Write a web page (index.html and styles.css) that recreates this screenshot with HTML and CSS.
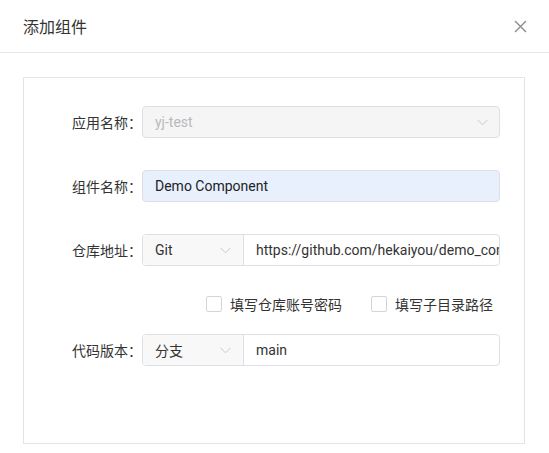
FILE: index.html
```html
<!DOCTYPE html>
<html lang="zh-CN">
<head>
<meta charset="utf-8">
<title>添加组件</title>
<link rel="stylesheet" href="styles.css">
</head>
<body>
<div class="dialog">
  <div class="header">
    <span class="title">添加组件</span>
    <svg class="close" width="13" height="13" viewBox="0 0 13 13"><path d="M1 1L12 12M12 1L1 12" stroke="#8c8c8c" stroke-width="1.4" fill="none"/></svg>
  </div>
  <div class="body">
    <div class="card">
      <div class="row">
        <label class="label">应用名称：</label>
        <div class="input disabled">
          <span class="val">yj-test</span>
          <svg class="arrow" width="11" height="7" viewBox="0 0 11 7"><path d="M0.5 0.8L5.5 5.8L10.5 0.8" stroke="#c8c9cc" stroke-width="1" fill="none"/></svg>
        </div>
      </div>
      <div class="row">
        <label class="label">组件名称：</label>
        <div class="input autofill"><span class="val">Demo Component</span></div>
      </div>
      <div class="row">
        <label class="label">仓库地址：</label>
        <div class="group">
          <div class="prepend">
            <span class="val">Git</span>
            <svg class="arrow" width="11" height="7" viewBox="0 0 11 7"><path d="M0.5 0.8L5.5 5.8L10.5 0.8" stroke="#c8c9cc" stroke-width="1" fill="none"/></svg>
          </div>
          <div class="field"><span class="val">https://github.com/hekaiyou/demo_component</span></div>
        </div>
      </div>
      <div class="checks">
        <label class="check"><span class="box"></span><span>填写仓库账号密码</span></label>
        <label class="check"><span class="box"></span><span>填写子目录路径</span></label>
      </div>
      <div class="row last">
        <label class="label">代码版本：</label>
        <div class="group">
          <div class="prepend">
            <span class="val">分支</span>
            <svg class="arrow" width="11" height="7" viewBox="0 0 11 7"><path d="M0.5 0.8L5.5 5.8L10.5 0.8" stroke="#c8c9cc" stroke-width="1" fill="none"/></svg>
          </div>
          <div class="field"><span class="val">main</span></div>
        </div>
      </div>
    </div>
  </div>
</div>
</body>
</html>
```
FILE: styles.css
```css
html, body {
  margin: 0;
  padding: 0;
  background: #fff;
}
body {
  font-family: Roboto, "Noto Sans CJK SC", sans-serif;
  font-size: 14px;
  color: #333;
}
.dialog {
  width: 549px;
  height: 453px;
  overflow: hidden;
}
.header {
  height: 52px;
  border-bottom: 1px solid #e8e8e8;
  display: flex;
  align-items: center;
  justify-content: space-between;
  padding: 0 22px 0 23px;
}
.title {
  font-size: 16px;
  color: #333;
  font-family: "Noto Sans CJK SC", sans-serif;
}
.body {
  padding: 24px 24px 0 23px;
}
.card {
  box-sizing: border-box;
  border: 1px solid #e4e4e4;
  height: 367px;
  padding: 28px 24px 0 0;
}
.row {
  display: flex;
  align-items: center;
  height: 32px;
  margin-bottom: 32px;
}
.row.last { margin-bottom: 0; }
.label {
  width: 118px;
  flex: none;
  text-align: right;
  font-family: "Noto Sans CJK SC", sans-serif;
  color: #333;
  white-space: nowrap;
}
.input {
  flex: 1;
  height: 32px;
  box-sizing: border-box;
  border: 1px solid #dcdfe6;
  border-radius: 4px;
  display: flex;
  align-items: center;
  padding: 0 11px 0 12px;
  justify-content: space-between;
  overflow: hidden;
}
.input.disabled {
  background: #f5f5f5;
  color: #b8b9bc;
}
.input.autofill {
  background: #e8f0fe;
  color: #222;
}
.val {
  white-space: nowrap;
}
.group {
  flex: 1;
  min-width: 0;
  height: 32px;
  box-sizing: border-box;
  border: 1px solid #dcdfe6;
  border-radius: 4px;
  display: flex;
  overflow: hidden;
}
.prepend {
  width: 101px;
  flex: none;
  box-sizing: border-box;
  background: #f8f8f8;
  border-right: 1px solid #dcdfe6;
  display: flex;
  align-items: center;
  justify-content: space-between;
  padding: 0 12px 0 12px;
  color: #333;
}
.field {
  flex: 1;
  min-width: 0;
  display: flex;
  align-items: center;
  padding: 0 12px;
  overflow: hidden;
  color: #333;
}
.arrow { flex: none; }
.checks {
  display: flex;
  justify-content: flex-end;
  align-items: center;
  gap: 29px;
  height: 32px;
  margin: -10px 7px 14px 0;
  font-family: "Noto Sans CJK SC", sans-serif;
  color: #333;
}
.check {
  display: flex;
  align-items: center;
  gap: 8px;
}
.box {
  width: 14px;
  height: 14px;
  border: 1px solid #d5d5d5;
  border-radius: 2px;
  background: #fff;
}
```
